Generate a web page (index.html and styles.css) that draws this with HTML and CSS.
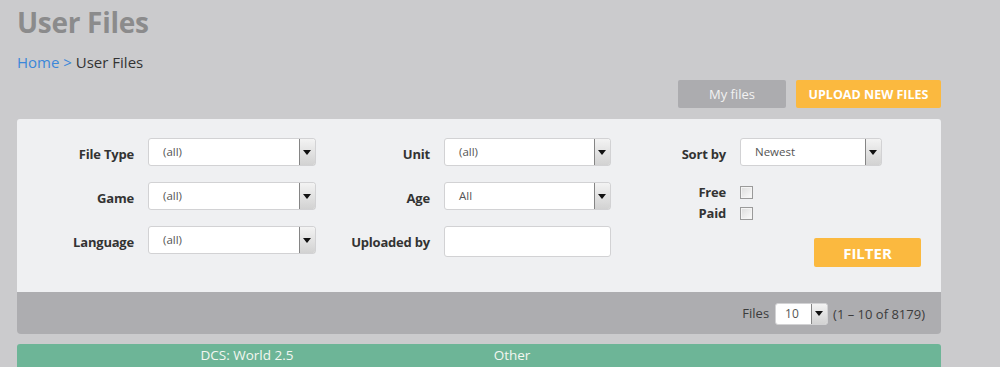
FILE: index.html
```html
<!DOCTYPE html>
<html>
<head>
<meta charset="utf-8">
<title>User Files</title>
<link rel="stylesheet" href="styles.css">
</head>
<body>
<div class="page">
  <h1 class="title">User Files</h1>
  <div class="crumbs"><a href="#" class="crumb-link">Home</a> <span class="crumb-sep">&gt;</span> User Files</div>
  <div class="actions">
    <a href="#" class="btn btn-gray">My files</a>
    <a href="#" class="btn btn-orange">UPLOAD NEW FILES</a>
  </div>
  <div class="panel">
    <div class="filters">
      <label class="lbl r1 c1">File Type</label>
      <div class="select r1 c2"><span class="sel-val">(all)</span><span class="sel-arrow"></span></div>
      <label class="lbl r1 c3">Unit</label>
      <div class="select r1 c4"><span class="sel-val">(all)</span><span class="sel-arrow"></span></div>
      <label class="lbl r1 c5">Sort by</label>
      <div class="select select-sort r1 c6"><span class="sel-val">Newest</span><span class="sel-arrow"></span></div>

      <label class="lbl r2 c1">Game</label>
      <div class="select r2 c2"><span class="sel-val">(all)</span><span class="sel-arrow"></span></div>
      <label class="lbl r2 c3">Age</label>
      <div class="select r2 c4"><span class="sel-val">All</span><span class="sel-arrow"></span></div>

      <div class="side">
        <div class="checks">
          <span class="lbl">Free</span><span class="check"></span>
          <span class="lbl">Paid</span><span class="check"></span>
        </div>
        <a href="#" class="btn-filter">FILTER</a>
      </div>

      <label class="lbl r3 c1">Language</label>
      <div class="select r3 c2"><span class="sel-val">(all)</span><span class="sel-arrow"></span></div>
      <label class="lbl r3 c3">Uploaded by</label>
      <div class="input r3 c4"></div>
    </div>
  </div>
  <div class="pager">
    <span class="pager-lbl">Files</span>
    <div class="select select-small"><span class="sel-val">10</span><span class="sel-arrow"></span></div>
    <span class="pager-count">(1 – 10 of 8179)</span>
  </div>
  <div class="listhead">
    <span class="lh-game">DCS: World 2.5</span>
    <span class="lh-type">Other</span>
  </div>
</div>
</body>
</html>
```

FILE: styles.css
```css
* { box-sizing: border-box; }
html, body { margin: 0; padding: 0; }
body {
  background: #cbcbcd;
  font-family: "Open Sans", "Noto Sans", sans-serif;
  color: #333;
  width: 1000px;
  height: 367px;
  overflow: hidden;
}
.page {
  margin-left: 17px;
  width: 924px;
}
.title {
  margin: 0;
  padding-top: 3px;
  font-size: 28px;
  line-height: 38px;
  font-weight: 700;
  color: #8b8b8c;
  letter-spacing: -0.3px;
}
.crumbs {
  margin-top: 11px;
  font-size: 15px;
  line-height: 20px;
  color: #333;
}
.crumb-link { color: #3b87d9; text-decoration: none; }
.crumb-sep { color: #3b87d9; }
.actions {
  display: flex;
  justify-content: flex-end;
  gap: 10px;
  margin-top: 8px;
}
.btn {
  display: flex;
  align-items: center;
  justify-content: center;
  height: 28px;
  border-radius: 2px;
  text-decoration: none;
  font-size: 13px;
}
.btn-gray { width: 108px; background: #acacaf; color: #f2f2f2; }
.btn-orange { width: 145px; background: #fbb93f; color: #fff; font-weight: 700; font-size: 12.5px; }
.panel {
  margin-top: 11px;
  background: #eff0f2;
  border-radius: 3px 3px 0 0;
  padding: 19px 20px 25px 13px;
}
.filters {
  display: grid;
  grid-template-columns: 104px 168px 100px 167px 101px 1fr;
  grid-template-rows: 28px 28px auto;
  column-gap: 14px;
  row-gap: 16px;
  align-items: start;
}
.r1 { grid-row: 1; } .r2 { grid-row: 2; } .r3 { grid-row: 3; }
.c1 { grid-column: 1; } .c2 { grid-column: 2; } .c3 { grid-column: 3; }
.c4 { grid-column: 4; } .c5 { grid-column: 5; } .c6 { grid-column: 6; }
.lbl {
  font-size: 13px;
  font-weight: 700;
  color: #333;
  text-align: right;
  line-height: 28px;
  padding-top: 2px;
  letter-spacing: -0.2px;
}
.select {
  display: flex;
  height: 28px;
  background: #fff;
  border: 1px solid #d2d2d4;
  border-radius: 3px;
  overflow: hidden;
}
.select-sort { width: 142px; }
.sel-val {
  flex: 1;
  padding-left: 14px;
  font-size: 11.5px;
  line-height: 26px;
  color: #555;
}
.sel-arrow {
  width: 17px;
  border: 1px solid #858585;
  border-radius: 0 2px 2px 0;
  background: linear-gradient(#f3f3f3, #d2d2d2);
  position: relative;
  margin: -1px -1px -1px 0;
}
.sel-arrow::after {
  content: "";
  position: absolute;
  left: 3px;
  top: 11px;
  border-left: 4px solid transparent;
  border-right: 4px solid transparent;
  border-top: 5px solid #111;
}
.input {
  height: 31px;
  background: #fff;
  border: 1px solid #d2d2d4;
  border-radius: 3px;
}
.side {
  grid-row: 2 / 4;
  grid-column: 5 / 7;
  display: flex;
  flex-direction: column;
}
.checks {
  display: grid;
  grid-template-columns: 101px 13px;
  column-gap: 14px;
  row-gap: 3px;
  align-items: center;
  padding-top: 1px;
}
.checks .lbl { line-height: 18px; padding-top: 0; }
.check {
  width: 13px;
  height: 13px;
  border: 1px solid #9a9a9a;
  background: linear-gradient(135deg, #dcdcdc, #fbfbfb);
  box-shadow: inset 0 0 0 1px #f4f4f4;
}
.btn-filter {
  align-self: flex-end;
  width: 107px;
  height: 29px;
  background: #fbb93f;
  border-radius: 2px;
  color: #fff;
  font-weight: 700;
  font-size: 15px;
  display: flex;
  align-items: center;
  justify-content: center;
  text-decoration: none;
  margin-top: 16px;
}
.pager {
  height: 42px;
  background: #adadb0;
  border-radius: 0 0 4px 4px;
  display: flex;
  justify-content: flex-end;
  align-items: center;
  padding-right: 16px;
  font-size: 13px;
  color: #3c3c3c;
}
.select-small {
  width: 53px;
  height: 22px;
  margin: 2px 5px 0 6px;
}
.select-small .sel-val { padding-left: 9px; line-height: 20px; font-size: 12px; }
.select-small .sel-arrow::after { top: 7px; }
.pager-count { padding-top: 1px; }
.listhead {
  margin-top: 10px;
  height: 23px;
  background: #6db597;
  border-radius: 3px 3px 0 0;
  display: flex;
  color: #f3f7f1;
  font-size: 13.5px;
  line-height: 23px;
}
.lh-game { width: 460px; text-align: center; }
.lh-type { width: 70px; text-align: center; }
```
